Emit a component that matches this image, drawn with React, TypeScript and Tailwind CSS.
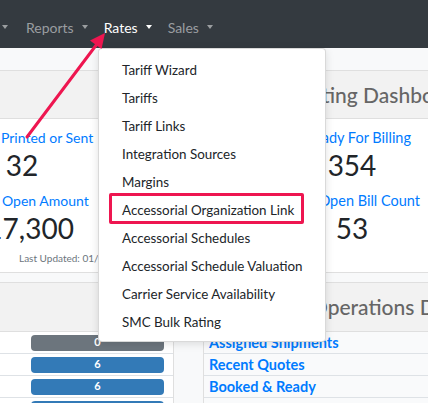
import React from 'react';

const menuItems = [
  'Tariff Wizard',
  'Tariffs',
  'Tariff Links',
  'Integration Sources',
  'Margins',
  'Accessorial Organization Link',
  'Accessorial Schedules',
  'Accessorial Schedule Valuation',
  'Carrier Service Availability',
  'SMC Bulk Rating',
];

const Caret: React.FC = () => (
  <span className="inline-block h-0 w-0 border-x-[3.5px] border-t-[4.5px] border-x-transparent border-t-current" />
);

const NavItem: React.FC<{ label: string; active?: boolean }> = ({ label, active }) => (
  <div className={`flex items-center px-2 ${active ? 'text-white' : 'text-[#9a9da0]'}`}>
    <span>{label}</span>
    <span className="ml-[8px] flex">
      <Caret />
    </span>
  </div>
);

// title is split so the part under the open menu keeps its place
const CardHeader: React.FC<{ lead?: string; title?: string; leadW?: string; h?: string }> = ({
  lead,
  title,
  leadW = '',
  h = 'h-[48px]',
}) => (
  <div className={`flex ${h} items-center border-b border-[#dfdfdf] bg-[#f2f2f2]`}>
    {title && (
      <div className="flex whitespace-nowrap text-[21px] font-medium text-[#666]">
        <span className={`${leadW} text-right`}>{lead}</span>
        <span>{title}</span>
      </div>
    )}
  </div>
);

const badges = [
  { value: 0, color: 'bg-[#6c757d]' },
  { value: 6, color: 'bg-[#337ab7]' },
  { value: 6, color: 'bg-[#337ab7]' },
  { value: 3, color: 'bg-[#337ab7]' },
];

const opsLinks = ['Assigned Shipments', 'Recent Quotes', 'Booked & Ready', 'In Transit'];

export default function App() {
  return (
    <div className="relative h-[403px] w-[428px] overflow-hidden bg-[#f8f9fa] font-['Segoe_UI',Lato,sans-serif] text-[14px] text-[#212529]">
      <nav className="flex h-[48px] items-center bg-[#343a40] pt-[6px]">
        <span className="ml-[2px] mr-[10px] flex text-[#9a9da0]">
          <Caret />
        </span>
        <NavItem label="Reports" />
        <NavItem label="Rates" active />
        <NavItem label="Sales" />
      </nav>

      <div className="-ml-[20px] grid w-[682px] grid-cols-[194px_459px] gap-x-[29px] gap-y-[9px] pt-[22px]">
        {/* quotes card */}
        <div className="border border-[#dfdfdf] bg-white">
          <CardHeader />
          <div className="h-[153px] pt-[8px] leading-[21px]">
            <div className="whitespace-nowrap pl-[20px] text-[#007bff]">Printed or Sent</div>
            <div className="flex w-[82px] justify-center whitespace-nowrap text-[28px] leading-[34px]">32</div>
            <div className="mt-[8px] whitespace-nowrap pl-[21px] text-[#007bff]">Open Amount</div>
            <div className="flex w-[82px] justify-center whitespace-nowrap text-[28px] leading-[34px]">$17,300</div>
            <div className="mt-[6px] whitespace-nowrap pl-[38px] text-[10px] leading-[14px] text-[#6c757d]">
              Last Updated: 01/19/2024
            </div>
          </div>
        </div>

        {/* rating card */}
        <div className="border border-[#dfdfdf] bg-white">
          <CardHeader lead="Ra" title="ting Dashboard" leadW="w-[118px]" />
          <div className="h-[153px] pt-[8px] leading-[21px]">
            <div className="ml-[78px] w-[140px]">
              <div className="whitespace-nowrap pr-[11px] text-right text-[14.5px] text-[#007bff]">Ready For Billing</div>
              <div className="flex justify-center text-[28px] leading-[34px]">354</div>
              <div className="mt-[8px] whitespace-nowrap pr-[2px] text-right text-[14.5px] text-[#007bff]">Open Bill Count</div>
              <div className="flex justify-center text-[28px] leading-[34px]">53</div>
            </div>
          </div>
        </div>

        {/* status counts */}
        <div className="border border-[#dfdfdf] bg-white">
          <CardHeader h="h-[49px]" />
          {badges.map((b, i) => (
            <div key={i} className="flex h-[22px] items-center justify-end border-b border-[#dee2e6] pr-[9px]">
              <span
                className={`flex h-[16px] w-[133px] items-center justify-center rounded-[4px] text-[11px] font-bold text-white ${b.color}`}
              >
                {b.value}
              </span>
            </div>
          ))}
        </div>

        {/* operations card */}
        <div className="border border-[#dfdfdf] bg-[#f9fafb]">
          <CardHeader lead="Carrier " title="Operations Dashboard" leadW="w-[107px]" h="h-[49px]" />
          {opsLinks.map((l) => (
            <div
              key={l}
              className="flex h-[22px] items-center border-b border-[#dee2e6] pl-[5px] text-[14.5px] font-bold text-[#007bff]"
            >
              {l}
            </div>
          ))}
        </div>
      </div>

      {/* Rates dropdown */}
      <div className="absolute left-[98px] top-[48px] w-[228px] rounded-[4px] border border-black/15 bg-white pt-[7px] pb-[5px] shadow-[0_2px_8px_rgba(0,0,0,0.12)]">
        {menuItems.map((m) => (
          <div key={m} className="h-[28px] whitespace-nowrap pl-[23px] text-[13.4px] leading-[28px] text-[#212529]">
            {m}
          </div>
        ))}
      </div>

      {/* annotation */}
      <div className="pointer-events-none absolute left-[109px] top-[193px] h-[31px] w-[195px] rounded-[2px] border-[3px] border-[#ee1650]" />
      <svg className="pointer-events-none absolute left-0 top-0" width="428" height="403">
        <line x1="27" y1="137" x2="97" y2="44" stroke="#ee1650" strokeWidth="3" strokeLinecap="round" />
        <polygon points="105,33 101.5,49 90,40.5" fill="#ee1650" />
      </svg>
    </div>
  );
}
